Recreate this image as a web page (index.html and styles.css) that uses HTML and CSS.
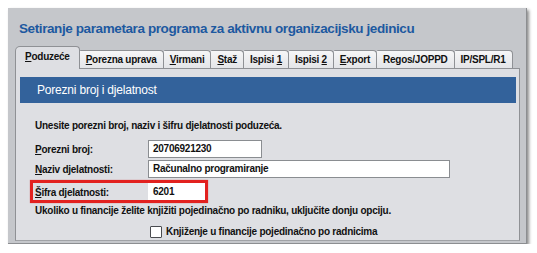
FILE: index.html
```html
<!DOCTYPE html>
<html lang="hr">
<head>
<meta charset="utf-8">
<title>Setiranje parametara</title>
<link rel="stylesheet" href="styles.css">
</head>
<body>
<div class="window">
  <div class="title">Setiranje parametara programa za aktivnu organizacijsku jedinicu</div>
  <div class="tabs">
    <div class="tab active"><u>P</u>oduzeće</div>
    <div class="tab"><u>P</u>orezna uprava</div>
    <div class="tab"><u>V</u>irmani</div>
    <div class="tab"><u>S</u>taž</div>
    <div class="tab">Ispisi <u>1</u></div>
    <div class="tab">Ispisi <u>2</u></div>
    <div class="tab"><u>E</u>xport</div>
    <div class="tab">Regos/JOPPD</div>
    <div class="tab">IP/SPL/R1</div>
  </div>
  <div class="panel">
    <div class="header">Porezni broj i djelatnost</div>
    <div class="content">
      <div class="intro">Unesite porezni broj, naziv i šifru djelatnosti poduzeća.</div>
      <div class="row first">
        <div class="label"><u>P</u>orezni broj:</div>
        <div class="input w-short">20706921230</div>
      </div>
      <div class="row">
        <div class="label"><u>N</u>aziv djelatnosti:</div>
        <div class="input w-long">Računalno programiranje</div>
      </div>
      <div class="row marked">
        <div class="label"><u>Š</u>ifra djelatnosti:</div>
        <div class="input w-code">6201</div>
        <div class="highlight"></div>
      </div>
      <div class="note">Ukoliko u financije želite knjižiti pojedinačno po radniku, uključite donju opciju.</div>
      <div class="check-row">
        <span class="checkbox"></span>
        <span class="check-label">Knjiženje u financije pojedinačno po radnicima</span>
      </div>
    </div>
  </div>
</div>
</body>
</html>
```
FILE: styles.css
```css
html, body {
  margin: 0;
  padding: 0;
  background: #ffffff;
}

body {
  font-family: "Liberation Sans", Arial, sans-serif;
  color: #111111;
}

.window {
  margin: 8px 0 0 8px;
  width: 519px;
  height: 236px;
  box-sizing: border-box;
  background: #c5c7cb;
  border-right: 1px solid #8c8e91;
  border-bottom: 1px solid #8c8e91;
  box-shadow: 2px 2px 3px rgba(0, 0, 0, 0.45);
  padding: 0 6px 0 7px;
  display: flex;
  flex-direction: column;
}

.title {
  font-size: 13.5px;
  letter-spacing: -0.4px;
  font-weight: bold;
  color: #1d59a0;
  line-height: 16px;
  padding: 13px 0 0 4px;
  height: 25px;
}

.tabs {
  display: flex;
  align-items: flex-end;
  height: 22px;
}

.tab {
  font-size: 10px;
  letter-spacing: -0.25px;
  font-weight: bold;
  color: #111111;
  height: 18px;
  line-height: 17px;
  box-sizing: border-box;
  padding: 0 6px;
  border: 1px solid #8f9195;
  border-bottom: none;
  border-left: none;
  border-radius: 1px 4px 0 0;
  background: linear-gradient(#f6f6f7, #e4e5e8);
  white-space: nowrap;
}

.tab:first-child {
  border-left: 1px solid #8f9195;
}

.tab.active {
  position: relative;
  z-index: 1;
  height: 23px;
  margin-bottom: -1px;
  line-height: 20px;
  padding: 0 9px 0 9px;
  border-left: 1px solid #8f9195;
  border-radius: 5px 4px 0 0;
  background: #dedfe3;
}

.tab u {
  text-decoration-thickness: 1px;
  text-underline-offset: 1px;
}

.panel {
  flex: 1;
  background: #dedfe3;
  border: 1px solid #8f9195;
  border-bottom: 1px solid #a0a2a6;
  margin-bottom: 2px;
  padding: 8px 3px 0 4px;
}

.header {
  background: #33629b;
  color: #ffffff;
  font-size: 12px;
  letter-spacing: -0.2px;
  height: 26px;
  line-height: 26px;
  padding-left: 17px;
}

.content {
  padding-left: 15px;
  font-size: 10px;
  letter-spacing: -0.25px;
  font-weight: bold;
  color: #111111;
}

.intro {
  margin-top: 17px;
  line-height: 12px;
  height: 12px;
}

.row {
  display: flex;
  align-items: center;
  height: 18px;
  margin-top: 2px;
}

.row.first {
  margin-top: 8px;
}

.row.marked {
  position: relative;
  margin-top: 5px;
}

.label {
  width: 113px;
  flex: none;
}

.label u {
  text-underline-offset: 1px;
}

.input {
  height: 18px;
  box-sizing: border-box;
  background: #ffffff;
  border: 1px solid #8a8d91;
  line-height: 16px;
  padding-left: 4px;
}

.w-short { width: 114px; }
.w-long { width: 302px; }
.w-code { width: 57px; border-color: #ffffff; }

.highlight {
  position: absolute;
  left: -5px;
  top: -3px;
  width: 178px;
  height: 23px;
  box-sizing: border-box;
  border: 3px solid #e2211f;
  box-shadow: 0 0 1px rgba(200, 0, 0, 0.5);
}

.note {
  margin-top: 4px;
  line-height: 12px;
  height: 12px;
}

.check-row {
  display: flex;
  align-items: center;
  margin-top: 8px;
  margin-left: 115px;
  height: 14px;
}

.checkbox {
  width: 12px;
  height: 12px;
  box-sizing: border-box;
  background: #ffffff;
  border: 1px solid #4a4c50;
  border-radius: 1px;
  margin-right: 4px;
}

.check-label {
  line-height: 14px;
}
```
